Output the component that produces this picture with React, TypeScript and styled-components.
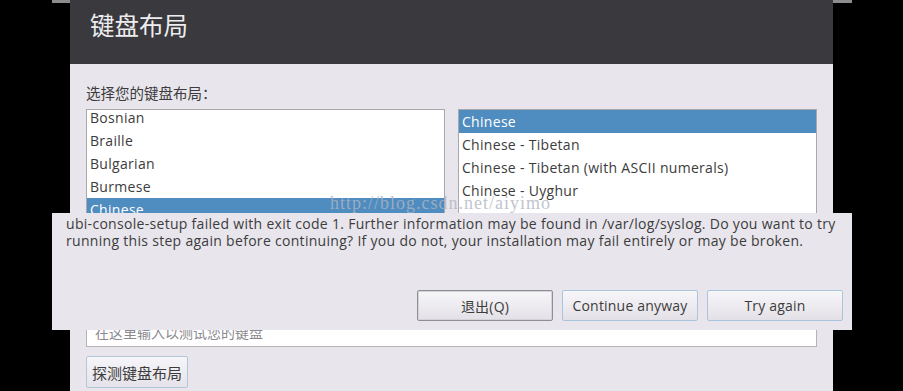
import styled, { createGlobalStyle } from 'styled-components';

const GlobalStyle = createGlobalStyle`
  html, body {
    margin: 0;
    padding: 0;
    background: #000;
  }
  * {
    box-sizing: border-box;
  }
`;

const FONT = `'Open Sans', 'Noto Sans CJK SC', sans-serif`;

const Screen = styled.div`
  position: relative;
  width: 903px;
  height: 391px;
  overflow: hidden;
  background: #000;
  padding-left: 70px;
  font-family: ${FONT};
  color: #3c3c3c;
`;

const TopStrip = styled.div`
  position: absolute;
  left: 52px;
  top: 0;
  width: 800px;
  height: 3px;
  background: #8c8c8e;
`;

const Window = styled.div`
  position: relative;
  width: 763px;
  height: 391px;
  display: flex;
  flex-direction: column;
  background: #e8e6ec;
`;

const Header = styled.div`
  height: 64px;
  flex-shrink: 0;
  background: #3a393e;
  padding: 10px 0 0 20px;
`;

const Title = styled.h1`
  margin: 0;
  font-size: 24.5px;
  line-height: 32px;
  font-weight: 400;
  color: #ededf0;
`;

const Body = styled.div`
  flex: 1;
  display: flex;
  flex-direction: column;
  padding: 20px 16px 0;
`;

const Label = styled.div`
  font-size: 14.5px;
  line-height: 20px;
  margin-bottom: 5px;
`;

const Lists = styled.div`
  display: grid;
  grid-template-columns: 359px 359px;
  gap: 13px;
  height: 200px;
`;

const List = styled.div`
  background: #fff;
  border: 1px solid #a8a8ad;
  overflow: hidden;
`;

const ListInner = styled.div<{ $shift: number }>`
  margin-top: ${(p) => -p.$shift}px;
`;

const Row = styled.div<{ $selected?: boolean }>`
  height: 23px;
  line-height: 23px;
  padding-left: 3px;
  font-size: 14px;
  letter-spacing: 0.3px;
  background: ${(p) => (p.$selected ? '#4f8cc0' : 'transparent')};
  color: ${(p) => (p.$selected ? '#fff' : '#3c3c3c')};
  white-space: nowrap;
`;

const TestInput = styled.input`
  margin-top: 9px;
  height: 29px;
  width: 100%;
  border: 1px solid #b4b4b8;
  background: #fff;
  padding: 0 8px;
  font-family: ${FONT};
  font-size: 14px;
  &::placeholder {
    color: #8a8a8e;
  }
`;

const DetectButton = styled.button`
  margin-top: 9px;
  align-self: flex-start;
  width: 102px;
  height: 32px;
  border: 1px solid #b2c6d8;
  border-radius: 2px;
  background: linear-gradient(#f6f5f8, #e5e3e9);
  font-family: ${FONT};
  font-size: 15px;
  color: #3c3c3c;
  padding: 0;
`;

const Watermark = styled.div`
  position: absolute;
  left: 330px;
  top: 193px;
  font-family: 'Liberation Serif', serif;
  font-size: 18px;
  letter-spacing: 1px;
  color: rgba(176, 180, 192, 0.8);
  pointer-events: none;
  white-space: nowrap;
`;

const Dialog = styled.div`
  position: absolute;
  left: 52px;
  top: 213px;
  width: 800px;
  height: 117px;
  background: #e8e6ec;
  display: flex;
  flex-direction: column;
  justify-content: space-between;
  padding: 2px 9px 9px 14px;
`;

const Message = styled.p`
  margin: 0;
  font-size: 14px;
  line-height: 17px;
  letter-spacing: 0.3px;
  color: #3c3c3c;
  white-space: nowrap;
`;

const Buttons = styled.div`
  display: flex;
  justify-content: flex-end;
  gap: 9px;
`;

const DialogButton = styled.button<{ $default?: boolean }>`
  width: 136px;
  height: 31px;
  border: 1px solid ${(p) => (p.$default ? '#8e9096' : '#a9c5de')};
  border-radius: 2px;
  background: linear-gradient(#f7f6f9, #e3e1e7);
  box-shadow: ${(p) => (p.$default ? 'inset 0 0 0 1px #d4d3d8' : 'none')};
  font-family: ${FONT};
  font-size: 14px;
  letter-spacing: 0.2px;
  color: #3c3c3c;
  padding: 0;
`;

const leftRows = ['Bosnian', 'Braille', 'Bulgarian', 'Burmese', 'Chinese', 'Croatian', 'Czech'];
const rightRows = [
  'Chinese',
  'Chinese - Tibetan',
  'Chinese - Tibetan (with ASCII numerals)',
  'Chinese - Uyghur',
];

export default function App() {
  return (
    <>
      <GlobalStyle />
      <Screen>
        <TopStrip />
        <Window>
          <Header>
            <Title>键盘布局</Title>
          </Header>
          <Body>
            <Label>选择您的键盘布局：</Label>
            <Lists>
              <List>
                <ListInner $shift={4}>
                  {leftRows.map((r) => (
                    <Row key={r} $selected={r === 'Chinese'}>
                      {r}
                    </Row>
                  ))}
                </ListInner>
              </List>
              <List>
                <ListInner $shift={0}>
                  {rightRows.map((r, i) => (
                    <Row key={r} $selected={i === 0}>
                      {r}
                    </Row>
                  ))}
                </ListInner>
              </List>
            </Lists>
            <TestInput placeholder="在这里输入以测试您的键盘" />
            <DetectButton>探测键盘布局</DetectButton>
          </Body>
        </Window>
        <Watermark>http://blog.csdn.net/aiyimo</Watermark>
        <Dialog>
          <Message>
            ubi-console-setup failed with exit code 1. Further information may be found in /var/log/syslog. Do you want to try
            <br />
            running this step again before continuing? If you do not, your installation may fail entirely or may be broken.
          </Message>
          <Buttons>
            <DialogButton $default>退出(Q)</DialogButton>
            <DialogButton>Continue anyway</DialogButton>
            <DialogButton>Try again</DialogButton>
          </Buttons>
        </Dialog>
      </Screen>
    </>
  );
}
